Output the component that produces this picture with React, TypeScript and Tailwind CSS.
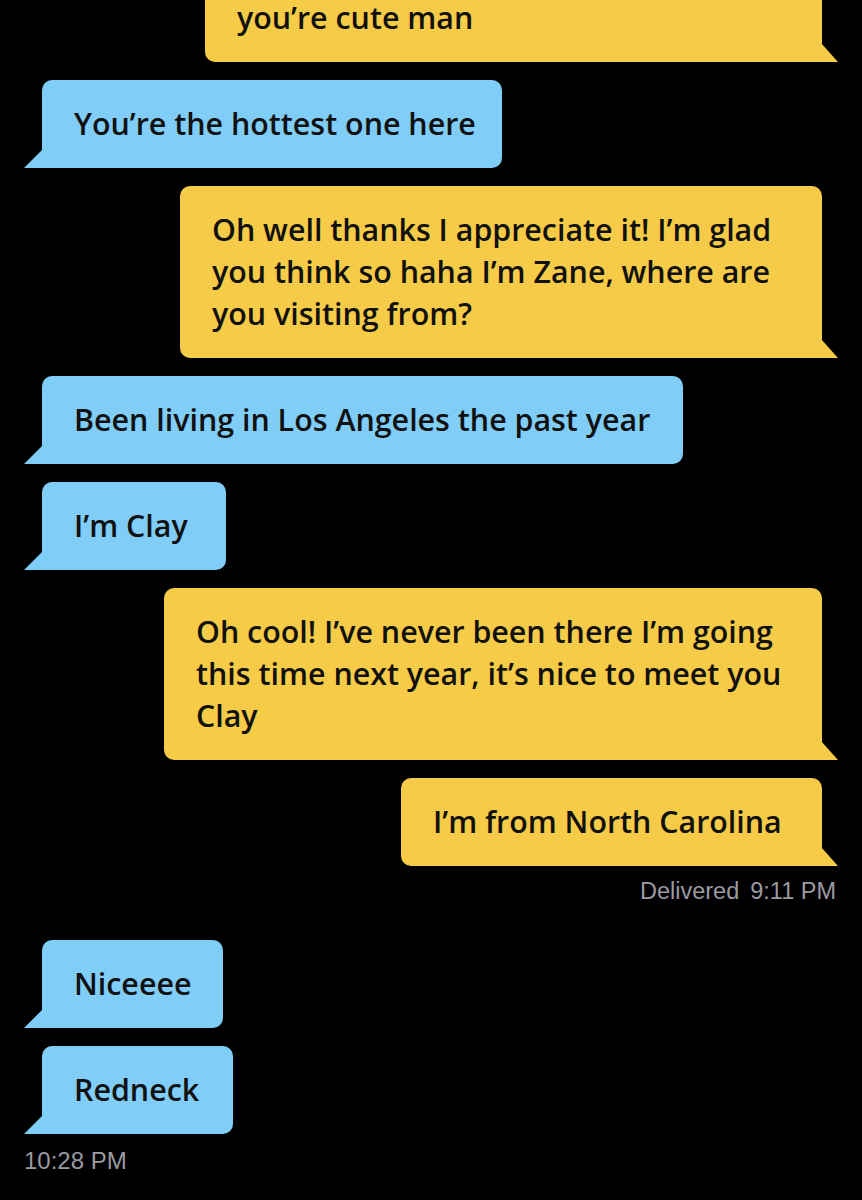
import React from "react";

type Msg = { side: "in" | "out"; w: number; lines: string[] };

const msgs: Msg[] = [
  { side: "in", w: 460, lines: ["You’re the hottest one here"] },
  {
    side: "out",
    w: 642,
    lines: [
      "Oh well thanks I appreciate it! I’m glad",
      "you think so haha I’m Zane, where are",
      "you visiting from?",
    ],
  },
  { side: "in", w: 641, lines: ["Been living in Los Angeles the past year"] },
  { side: "in", w: 184, lines: ["I’m Clay"] },
  {
    side: "out",
    w: 658,
    lines: [
      "Oh cool! I’ve never been there I’m going",
      "this time next year, it’s nice to meet you",
      "Clay",
    ],
  },
  { side: "out", w: 421, lines: ["I’m from North Carolina"] },
];

const msgs2: Msg[] = [
  { side: "in", w: 181, lines: ["Niceeee"] },
  { side: "in", w: 191, lines: ["Redneck"] },
];

function Bubble({ m, extra = "" }: { m: Msg; extra?: string }) {
  const isIn = m.side === "in";
  return (
    <div className={`flex ${isIn ? "justify-start" : "justify-end"} ${extra}`}>
      <div
        className={`relative py-[23px] pl-8 text-[30.4px] font-semibold leading-[42px] text-[#111111] ${
          isIn
            ? "rounded-tl-[10px] rounded-tr-[10px] rounded-br-[10px] bg-[#80CDF8]"
            : "rounded-tl-[10px] rounded-tr-[10px] rounded-bl-[10px] bg-[#F6CB47]"
        }`}
        style={{ width: m.w }}
      >
        {m.lines.map((l, i) => (
          <div key={i} className="whitespace-nowrap">
            {l}
          </div>
        ))}
        {isIn ? (
          <svg
            className="absolute bottom-0 left-[-18px]"
            width="19"
            height="19"
            viewBox="0 0 19 19"
          >
            <polygon points="19,0 19,19 0,19" fill="#80CDF8" />
          </svg>
        ) : (
          <svg
            className="absolute bottom-0 right-[-16px]"
            width="17"
            height="19"
            viewBox="0 0 17 19"
          >
            <polygon points="0,0 17,19 0,19" fill="#F6CB47" />
          </svg>
        )}
      </div>
    </div>
  );
}

export default function App() {
  return (
    <div
      className="h-[1200px] w-[862px] overflow-hidden bg-black"
      style={{ fontFamily: '"Open Sans", "Noto Sans", sans-serif' }}
    >
      <div className="flex flex-col pl-[42px] pr-[40px]">
        <Bubble
          m={{ side: "out", w: 617, lines: ["you’re cute man"] }}
          extra="mt-[-26px]"
        />
        <div className="mt-[18px] flex flex-col gap-[18px]">
          {msgs.map((m, i) => (
            <Bubble key={i} m={m} />
          ))}
        </div>
        <div
          className="mr-[-14px] mt-[12px] text-right text-[23.5px] leading-[26px] text-[#9A9AA0]"
          style={{ fontFamily: '"Liberation Sans", Arial, sans-serif' }}
        >
          Delivered<span className="ml-[11px]">9:11 PM</span>
        </div>
        <div className="mt-[36px] flex flex-col gap-[18px]">
          {msgs2.map((m, i) => (
            <Bubble key={i} m={m} />
          ))}
        </div>
        <div
          className="ml-[-18px] mt-[14px] text-[24px] leading-[26px] text-[#9A9AA0]"
          style={{ fontFamily: '"Liberation Sans", Arial, sans-serif' }}
        >
          10:28 PM
        </div>
      </div>
    </div>
  );
}
